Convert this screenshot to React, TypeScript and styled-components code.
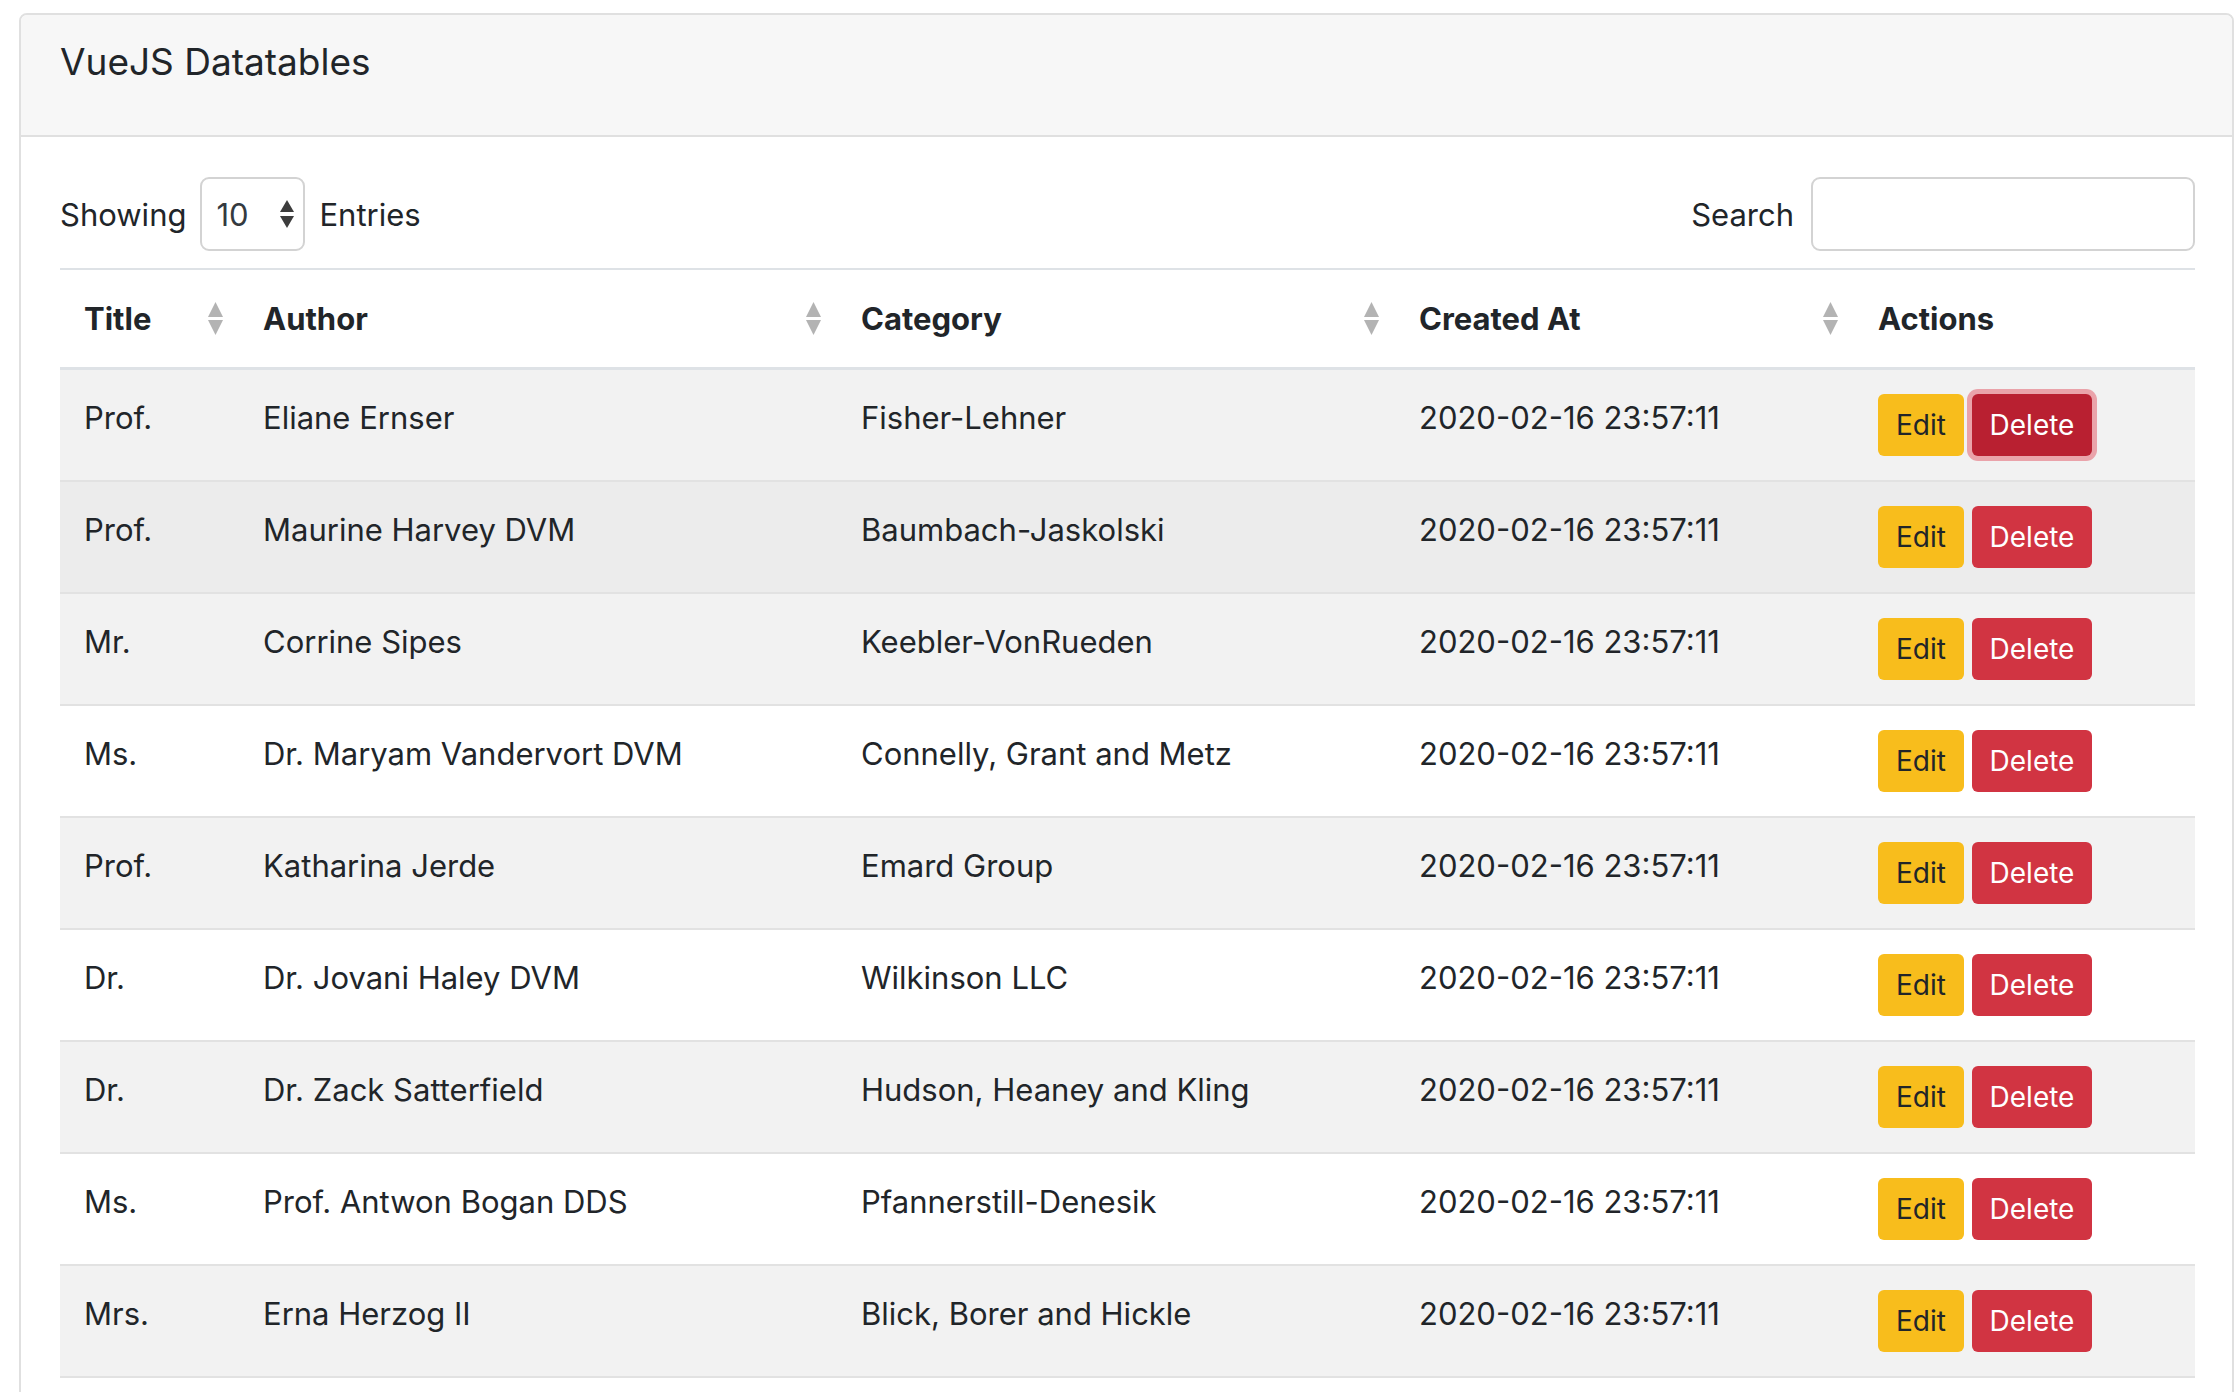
import React from "react";
import styled, { createGlobalStyle, css } from "styled-components";

const GlobalStyle = createGlobalStyle`
  html, body {
    margin: 0;
    padding: 0;
    background: #ffffff;
    overflow: hidden;
  }
  body {
    font-family: Inter, "Liberation Sans", Arial, sans-serif;
    color: #212529;
  }
  * { box-sizing: border-box; }
`;

const Page = styled.div`
  padding: 13px 4px 0 19px;
`;

const Card = styled.div`
  border: 2px solid #e0e0e0;
  border-radius: 8px;
  background: #ffffff;
  overflow: hidden;
`;

const CardHeader = styled.div`
  height: 122px;
  background: #f7f7f7;
  border-bottom: 2px solid #e0e0e0;
  padding: 24px 39px 0 39px;
`;

const CardTitle = styled.h4`
  margin: 0;
  font-size: 37px;
  font-weight: 400;
  line-height: 46px;
  color: #212529;
`;

const CardBody = styled.div`
  padding: 40px 37px 0 39px;
`;

const Toolbar = styled.div`
  display: flex;
  align-items: center;
  justify-content: space-between;
  height: 74px;
  margin-bottom: 17px;
`;

const ToolGroup = styled.div<{ $gap: number }>`
  display: flex;
  align-items: center;
  gap: ${(p) => p.$gap}px;
  font-size: 31px;
  color: #212529;
`;

const SelectBox = styled.div`
  width: 105px;
  height: 74px;
  border: 2px solid #d3d3d3;
  border-radius: 9px;
  display: flex;
  align-items: center;
  justify-content: space-between;
  padding: 0 9px 0 14px;
  font-size: 31px;
  color: #343a40;
  background: #ffffff;
`;

const SearchInput = styled.div`
  width: 384px;
  height: 74px;
  border: 2px solid #d3d3d3;
  border-radius: 9px;
  background: #ffffff;
`;

const Table = styled.table`
  width: 100%;
  border-collapse: separate;
  border-spacing: 0;
  table-layout: fixed;
`;

const HeadCell = styled.th`
  height: 102px;
  border-top: 2px solid #dee2e6;
  border-bottom: 3px solid #dee2e6;
  padding: 0 16px 0 24px;
  text-align: left;
  font-size: 31px;
  font-weight: 700;
  color: #212529;
  vertical-align: middle;
`;

const HeadInner = styled.div`
  display: flex;
  align-items: center;
  justify-content: space-between;
`;

const Row = styled.tr<{ $bg: string }>`
  background: ${(p) => p.$bg};
`;

const Cell = styled.td`
  border-bottom: 2px solid #e2e2e2;
  padding: 24px 24px 24px 24px;
  vertical-align: top;
  font-size: 31px;
  line-height: 48px;
  color: #212529;
  white-space: nowrap;
`;

const Actions = styled.div`
  display: flex;
  gap: 8px;
`;

const Btn = styled.button<{ $variant: "edit" | "delete"; $focus?: boolean }>`
  height: 62px;
  border: none;
  border-radius: 6px;
  font-family: Inter, "Liberation Sans", Arial, sans-serif;
  font-size: 28px;
  padding: 0;
  display: flex;
  align-items: center;
  justify-content: center;
  ${(p) =>
    p.$variant === "edit"
      ? css`
          width: 86px;
          background: #f8bd1c;
          color: #212529;
        `
      : css`
          width: 120px;
          background: ${p.$focus ? "#b92031" : "#d13442"};
          color: #ffffff;
        `}
  ${(p) =>
    p.$focus &&
    css`
      box-shadow: 0 0 0 5px rgba(225, 83, 97, 0.5);
    `}
`;

const TableTail = styled.div`
  height: 40px;
`;

const SortIcon = () => (
  <svg width="15" height="33" viewBox="0 0 15 33" style={{ flexShrink: 0 }}>
    <polygon points="7.5,0 15,15 0,15" fill="#b3b3b3" />
    <polygon points="0,18 15,18 7.5,33" fill="#b3b3b3" />
  </svg>
);

const SelectArrows = () => (
  <svg width="14" height="28" viewBox="0 0 14 28">
    <polygon points="7,0 14,12 0,12" fill="#3c3c3c" />
    <polygon points="0,16 14,16 7,28" fill="#3c3c3c" />
  </svg>
);

const rows = [
  ["Prof.", "Eliane Ernser", "Fisher-Lehner"],
  ["Prof.", "Maurine Harvey DVM", "Baumbach-Jaskolski"],
  ["Mr.", "Corrine Sipes", "Keebler-VonRueden"],
  ["Ms.", "Dr. Maryam Vandervort DVM", "Connelly, Grant and Metz"],
  ["Prof.", "Katharina Jerde", "Emard Group"],
  ["Dr.", "Dr. Jovani Haley DVM", "Wilkinson LLC"],
  ["Dr.", "Dr. Zack Satterfield", "Hudson, Heaney and Kling"],
  ["Ms.", "Prof. Antwon Bogan DDS", "Pfannerstill-Denesik"],
  ["Mrs.", "Erna Herzog II", "Blick, Borer and Hickle"],
];

const headers = [
  { label: "Title", width: 179, sort: true },
  { label: "Author", width: 598, sort: true },
  { label: "Category", width: 558, sort: true },
  { label: "Created At", width: 459, sort: true },
  { label: "Actions", width: 341, sort: false },
];

export default function App() {
  return (
    <>
      <GlobalStyle />
      <Page>
        <Card>
          <CardHeader>
            <CardTitle>VueJS Datatables</CardTitle>
          </CardHeader>
          <CardBody>
            <Toolbar>
              <ToolGroup $gap={14}>
                <span>Showing</span>
                <SelectBox>
                  <span>10</span>
                  <SelectArrows />
                </SelectBox>
                <span>Entries</span>
              </ToolGroup>
              <ToolGroup $gap={17}>
                <span>Search</span>
                <SearchInput />
              </ToolGroup>
            </Toolbar>
            <Table>
              <colgroup>
                {headers.map((h) => (
                  <col key={h.label} style={{ width: h.width }} />
                ))}
              </colgroup>
              <thead>
                <tr>
                  {headers.map((h) => (
                    <HeadCell key={h.label}>
                      <HeadInner>
                        <span>{h.label}</span>
                        {h.sort && <SortIcon />}
                      </HeadInner>
                    </HeadCell>
                  ))}
                </tr>
              </thead>
              <tbody>
                {rows.map((r, i) => (
                  <Row
                    key={i}
                    $bg={i === 1 ? "#ececec" : i % 2 === 0 ? "#f2f2f2" : "#ffffff"}
                  >
                    <Cell>{r[0]}</Cell>
                    <Cell>{r[1]}</Cell>
                    <Cell>{r[2]}</Cell>
                    <Cell>2020-02-16 23:57:11</Cell>
                    <Cell>
                      <Actions>
                        <Btn $variant="edit">Edit</Btn>
                        <Btn $variant="delete" $focus={i === 0}>
                          Delete
                        </Btn>
                      </Actions>
                    </Cell>
                  </Row>
                ))}
              </tbody>
            </Table>
            <TableTail />
          </CardBody>
        </Card>
      </Page>
    </>
  );
}
